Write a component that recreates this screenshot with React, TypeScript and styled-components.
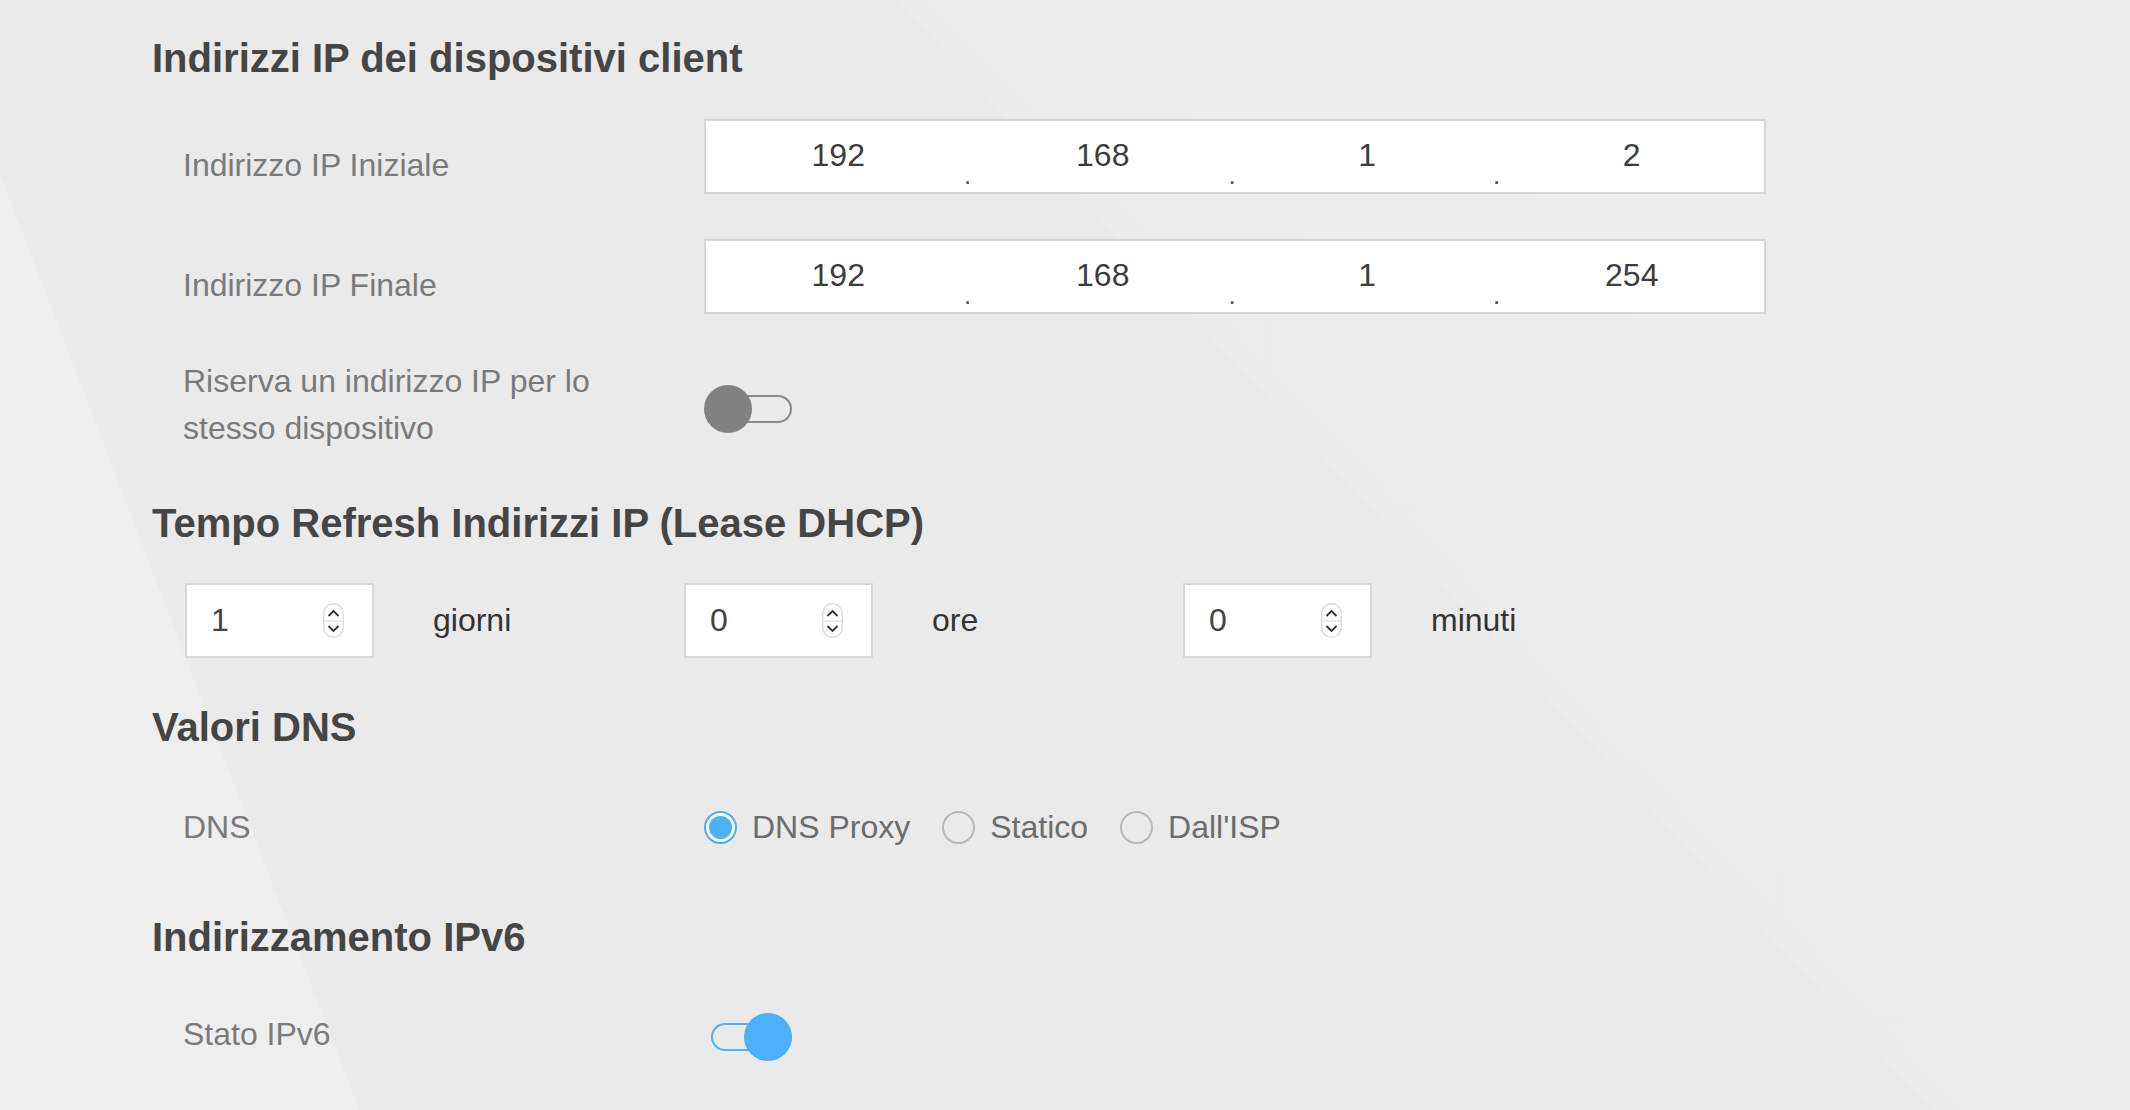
import React from 'react';
import styled, { createGlobalStyle } from 'styled-components';

const GlobalStyle = createGlobalStyle`
  html, body {
    margin: 0;
    padding: 0;
  }
  body {
    font-family: "Liberation Sans", Arial, Helvetica, sans-serif;
    background-color: #eaeaea;
    background-image:
      linear-gradient(69deg, #efefef 0%, #eeeeee 14%, rgba(234, 234, 234, 0) 14.1%),
      linear-gradient(47deg, rgba(0, 0, 0, 0) 61%, #ececec 61.1%, #ededed 100%);
    min-height: 1110px;
  }
`;

const Page = styled.div`
  padding: 34px 0 0 152px;
  min-height: 1110px;
  box-sizing: border-box;
`;

const Heading = styled.h2<{ $gap?: number }>`
  margin: ${(p) => p.$gap ?? 0}px 0 0 0;
  font-size: 40px;
  line-height: 48px;
  font-weight: 700;
  color: #454545;
`;

const Row = styled.div<{ $gap: number }>`
  display: flex;
  align-items: flex-start;
  margin-top: ${(p) => p.$gap}px;
  padding-left: 31px;
`;

const Label = styled.div<{ $top?: number }>`
  width: 521px;
  box-sizing: border-box;
  padding: ${(p) => p.$top ?? 0}px 80px 0 0;
  font-size: 32px;
  line-height: 47px;
  color: #7a7a7a;
`;

const IpBox = styled.div`
  display: flex;
  align-items: center;
  width: 1062px;
  height: 75px;
  box-sizing: border-box;
  background: #ffffff;
  border: 2px solid #d3d6d9;
`;

const IpPart = styled.span`
  flex: 1;
  text-align: center;
  font-size: 32px;
  color: #3d3d3d;
  margin-top: -2px;
`;

const IpDot = styled.span`
  width: 0;
  display: flex;
  justify-content: center;
  font-size: 26px;
  color: #555555;
  margin: 38px 3px 0 -3px;
`;

const ToggleWrap = styled.div<{ $top: number }>`
  position: relative;
  width: 88px;
  height: 48px;
  margin-top: ${(p) => p.$top}px;
  cursor: pointer;
`;

const ToggleTrack = styled.div<{ $on: boolean }>`
  position: absolute;
  left: 7px;
  right: 0;
  top: 10px;
  height: 28px;
  box-sizing: border-box;
  border-radius: 14px;
  border: 2px solid ${(p) => (p.$on ? '#4db1f7' : '#8a8a8a')};
`;

const ToggleKnob = styled.div<{ $on: boolean }>`
  position: absolute;
  top: 0;
  left: ${(p) => (p.$on ? '40px' : '0')};
  width: 48px;
  height: 48px;
  border-radius: 50%;
  background: ${(p) => (p.$on ? '#4db1f7' : '#818181')};
`;

const LeaseRow = styled.div`
  display: grid;
  grid-template-columns: repeat(3, 499px);
  margin-top: 36px;
  padding-left: 33px;
`;

const LeaseGroup = styled.div`
  display: flex;
  align-items: center;
`;

const NumberBox = styled.div`
  display: flex;
  align-items: center;
  justify-content: space-between;
  width: 189px;
  height: 75px;
  box-sizing: border-box;
  padding: 0 28px 0 24px;
  background: #ffffff;
  border: 2px solid #d7d8da;
`;

const NumberValue = styled.span`
  font-size: 32px;
  color: #444444;
`;

const Unit = styled.span`
  margin-left: 59px;
  font-size: 32px;
  color: #333333;
`;

const RadioGroup = styled.div`
  display: flex;
  align-items: center;
  gap: 32px;
  height: 47px;
`;

const RadioOption = styled.label`
  display: flex;
  align-items: center;
  gap: 15px;
  font-size: 32px;
  color: #6c6c6c;
  cursor: pointer;
`;

const RadioCircle = styled.span<{ $checked: boolean }>`
  display: flex;
  align-items: center;
  justify-content: center;
  width: 33px;
  height: 33px;
  box-sizing: border-box;
  border-radius: 50%;
  border: 2px solid ${(p) => (p.$checked ? '#4aaef3' : '#b8b8b8')};
  background: ${(p) => (p.$checked ? '#ffffff' : 'transparent')};
  &::after {
    content: '';
    display: ${(p) => (p.$checked ? 'block' : 'none')};
    width: 23px;
    height: 23px;
    border-radius: 50%;
    background: #4db1f7;
  }
`;

function Spinner(): JSX.Element {
  return (
    <svg width="21" height="35" viewBox="0 0 21 35">
      <rect x="0.75" y="0.75" width="19.5" height="33.5" rx="9.5" fill="#ffffff" stroke="#dedede" strokeWidth="1.5" />
      <line x1="1" y1="18" x2="20" y2="18" stroke="#e6e6e6" strokeWidth="1.5" />
      <path d="M5.5 13 L10.5 8 L15.5 13" fill="none" stroke="#333333" strokeWidth="1.8" />
      <path d="M5.5 23 L10.5 28 L15.5 23" fill="none" stroke="#333333" strokeWidth="1.8" />
    </svg>
  );
}

function IpField({ parts }: { parts: string[] }): JSX.Element {
  return (
    <IpBox>
      {parts.map((p, i) => (
        <React.Fragment key={i}>
          {i > 0 && <IpDot>.</IpDot>}
          <IpPart>{p}</IpPart>
        </React.Fragment>
      ))}
    </IpBox>
  );
}

function Toggle({ on, top }: { on: boolean; top: number }): JSX.Element {
  return (
    <ToggleWrap $top={top}>
      <ToggleTrack $on={on} />
      <ToggleKnob $on={on} />
    </ToggleWrap>
  );
}

export default function App(): JSX.Element {
  const lease = [
    { value: '1', unit: 'giorni' },
    { value: '0', unit: 'ore' },
    { value: '0', unit: 'minuti' },
  ];
  const dns = [
    { label: 'DNS Proxy', checked: true },
    { label: 'Statico', checked: false },
    { label: "Dall'ISP", checked: false },
  ];

  return (
    <>
      <GlobalStyle />
      <Page>
        <Heading>Indirizzi IP dei dispositivi client</Heading>

        <Row $gap={37}>
          <Label $top={23}>Indirizzo IP Iniziale</Label>
          <IpField parts={['192', '168', '1', '2']} />
        </Row>

        <Row $gap={45}>
          <Label $top={23}>Indirizzo IP Finale</Label>
          <IpField parts={['192', '168', '1', '254']} />
        </Row>

        <Row $gap={44}>
          <Label>Riserva un indirizzo IP per lo stesso dispositivo</Label>
          <Toggle on={false} top={27} />
        </Row>

        <Heading $gap={47}>Tempo Refresh Indirizzi IP (Lease DHCP)</Heading>

        <LeaseRow>
          {lease.map((l) => (
            <LeaseGroup key={l.unit}>
              <NumberBox>
                <NumberValue>{l.value}</NumberValue>
                <Spinner />
              </NumberBox>
              <Unit>{l.unit}</Unit>
            </LeaseGroup>
          ))}
        </LeaseRow>

        <Heading $gap={45}>Valori DNS</Heading>

        <Row $gap={53}>
          <Label>DNS</Label>
          <RadioGroup>
            {dns.map((d) => (
              <RadioOption key={d.label}>
                <RadioCircle $checked={d.checked} />
                {d.label}
              </RadioOption>
            ))}
          </RadioGroup>
        </Row>

        <Heading $gap={62}>Indirizzamento IPv6</Heading>

        <Row $gap={50}>
          <Label>Stato IPv6</Label>
          <Toggle on top={2} />
        </Row>
      </Page>
    </>
  );
}
